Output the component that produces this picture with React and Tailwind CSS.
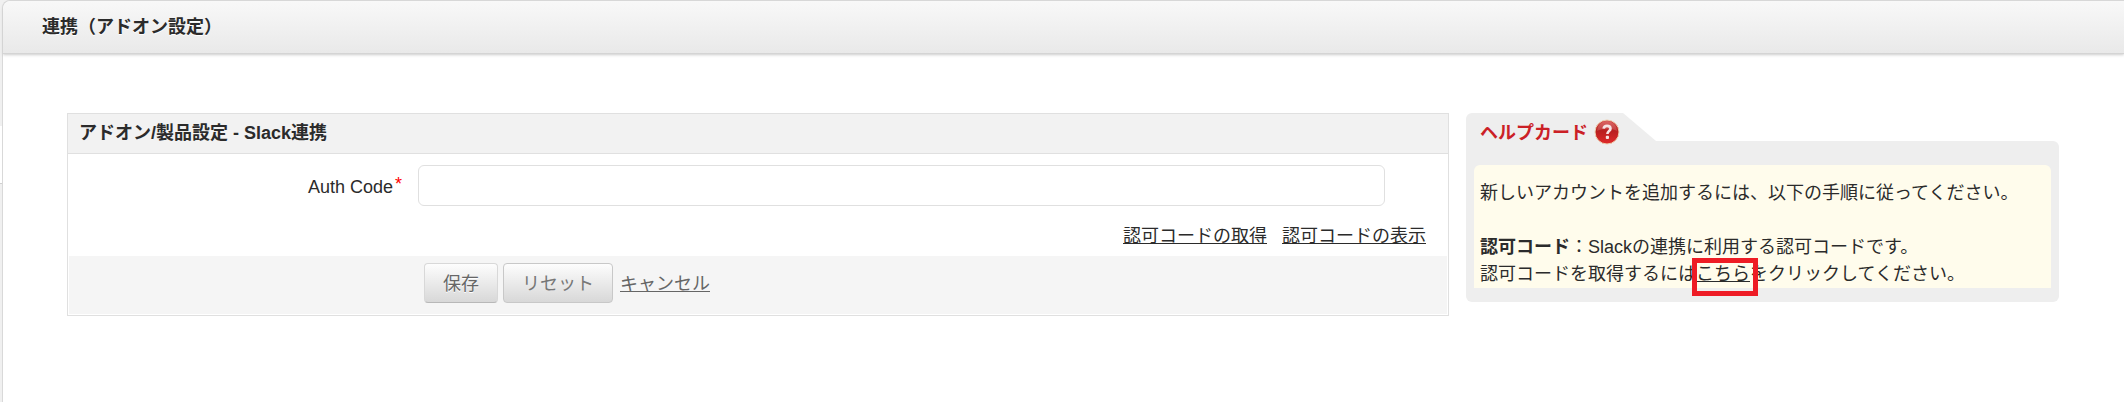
import React, { useState } from 'react'

const HelpIcon = () => (
  <svg width="26" height="26" viewBox="0 0 26 26" fill="none" aria-hidden="true">
    <defs>
      <linearGradient id="ball" x1="0" y1="0" x2="0" y2="1">
        <stop offset="0" stopColor="#d8504c" />
        <stop offset="0.45" stopColor="#b81f1f" />
        <stop offset="1" stopColor="#e02a2a" />
      </linearGradient>
    </defs>
    <circle cx="13" cy="13" r="12" fill="url(#ball)" stroke="#ecd0b0" strokeWidth="1" />
    <path d="M3 12a10 10 0 0 1 20 0c-5-3-14-3-20 0z" fill="#fff" fillOpacity="0.15" />
    <path d="M9.6 9.6c.3-1.9 1.6-2.7 3.4-2.7 2 0 3.5 1 3.5 2.8 0 2.3-3.1 2.5-3.1 5.3" stroke="#f6e4e4" strokeWidth="2.6" />
    <rect x="11.8" y="16.8" width="3.2" height="3.2" rx="1" fill="#f6e4e4" />
  </svg>
)

const SettingsForm = () => {
  const [code, setCode] = useState('')

  return (
    <form
      className="min-w-0 flex-1 border border-[#e0e0e0] bg-white"
      onSubmit={(e) => e.preventDefault()}
      onReset={() => setCode('')}
    >
      <h2 className="border-b border-[#e0e0e0] bg-[#f2f2f2] px-[11px] py-1.5 font-bold leading-[27px]">
        アドオン/製品設定 - Slack連携
      </h2>

      <div className="flex items-center pt-[11px] pr-[63px]">
        <label htmlFor="auth-code" className="flex w-[334px] shrink-0 items-start justify-end pt-0.5">
          <span className="pt-px">Auth Code</span>
          <span className="-mt-0.5 ml-0.5 text-[#f00]">*</span>
        </label>
        <input
          id="auth-code"
          type="text"
          value={code}
          onChange={(e) => setCode(e.target.value)}
          className="ml-4 h-[41px] min-w-0 flex-1 rounded-md border border-[#e0e0e0] bg-white px-3"
        />
      </div>

      <div className="flex justify-end gap-[15px] pt-[17px] pr-[22px] pb-[5px]">
        <a href="#get" className="underline">認可コードの取得</a>
        <a href="#show" className="underline">認可コードの表示</a>
      </div>

      {/* Form actions */}
      <div className="m-px flex items-center bg-[#f5f5f5] pt-[7px] pb-[11px] pl-[355px] text-[#666]">
        <button
          type="submit"
          className="h-10 rounded border border-[#d8d8d8] border-b-[#b8b8b8] bg-linear-to-b from-[#fdfdfd] to-[#d8d8d8] px-[18px] pt-0.5 text-shadow-[0_1px_0_#fff]"
        >
          保存
        </button>
        <button
          type="reset"
          className="ml-[5px] h-10 rounded border border-[#c8c8c8] bg-linear-to-b from-[#fdfdfd] to-[#d8d8d8] px-[18px] pt-0.5 text-[#777]"
        >
          リセット
        </button>
        <a href="#cancel" className="ml-[7px] pt-0.5 underline">キャンセル</a>
      </div>
    </form>
  )
}

const HelpCard = () => (
  <aside className="w-[593px] shrink-0">
    {/* Folder tab */}
    <div className="flex h-7">
      <div className="w-[157px] rounded-tl-md bg-[#eee]">
        <h2 className="flex items-start gap-1.5 pt-1.5 pl-3.5 font-bold whitespace-nowrap text-[#cb2026]">
          <span className="pt-px">ヘルプカード</span>
          <HelpIcon />
        </h2>
      </div>
      <svg width="33" height="28" viewBox="0 0 33 28" aria-hidden="true">
        <path d="M0 0L33 28H0z" fill="#eee" />
      </svg>
    </div>
    <div className="rounded-b-md rounded-tr-md bg-[#eee] px-2 pt-6 pb-3.5">
      <div className="rounded-t-md bg-[#fffcec] px-1.5 pt-[15px]">
        <p>新しいアカウントを追加するには、以下の手順に従ってください。</p>
        <p className="pt-[27px]">
          <b>認可コード</b>：Slackの連携に利用する認可コードです。
        </p>
        <p>
          認可コードを取得するには
          <span className="relative">
            <a href="#here" className="underline">こちら</a>
            <span className="pointer-events-none absolute -top-1.5 -right-2 -bottom-3 -left-1 border-[5px] border-[#ee1c25]" />
          </span>
          をクリックしてください。
        </p>
      </div>
    </div>
  </aside>
)

const App = () => (
  <div className="flex min-h-screen bg-[#f0f0f0] font-['Liberation_Sans','Noto_Sans_CJK_JP',sans-serif] text-[18px] leading-[27px] text-[#2b2b2b]">
    {/* Edge of the side menu */}
    <div className="flex w-0.5 flex-col">
      <div className="h-[126px] bg-[#f0f0f0]" />
      <div className="h-[57px] bg-white" />
      <div className="flex-1 border-t border-[#d0d0d0] bg-[#f0f0f0]" />
    </div>
    <main className="min-w-0 flex-1 rounded-tl-lg border-t border-l border-[#d9d9d9] bg-white">
      <header className="rounded-tl-lg border-b border-[#d4d4d4] bg-linear-to-b from-[#f8f8f8] to-[#e9e9e9] pt-[13px] pb-3 pl-[39px] shadow-[0_1px_3px_#ccc]">
        <h1 className="font-bold text-shadow-[0_1px_0_#fff]">連携（アドオン設定）</h1>
      </header>
      <div className="flex items-start gap-[17px] pt-[59px] pr-[65px] pl-16">
        <SettingsForm />
        <HelpCard />
      </div>
    </main>
  </div>
)

export default App
